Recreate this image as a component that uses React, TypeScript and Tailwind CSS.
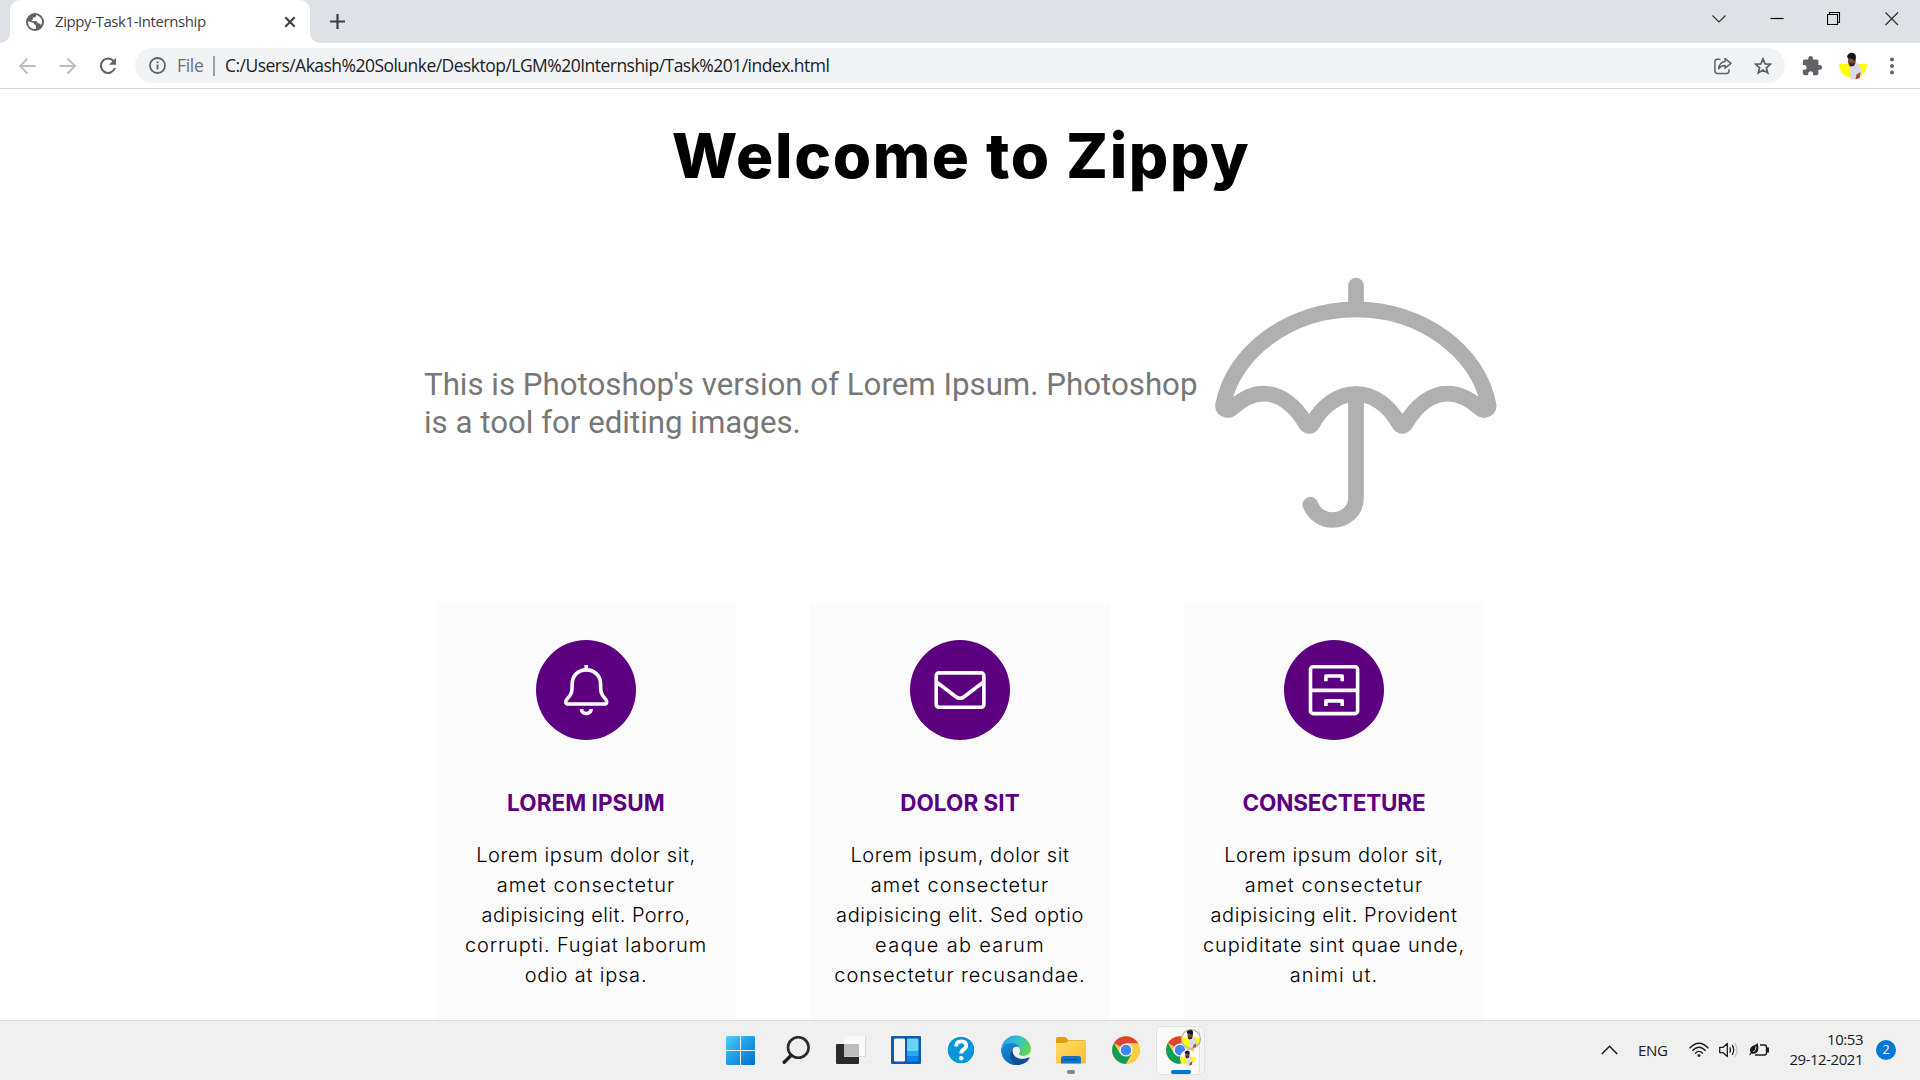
import type { ReactNode } from "react";

type Line = { text: string; tracking: string };
type Card = { title: string; titleTracking: string; icon: ReactNode; lines: Line[] };

const BellIcon = () => (
  <svg viewBox="0 0 100 100" className="size-[100px]" fill="none" stroke="#fff" strokeWidth="3.6">
    <path d="M50.2 25v5" />
    <path d="M50.2 29.9C42 29.9 36.2 36 36.2 43.5C36.2 51 36 54 31.3 58.8C28.6 61.5 29.6 64 32.5 64H68C70.9 64 71.9 61.5 69.2 58.8C64.5 54 64.6 51 64.6 43.5C64.6 36 58.4 29.9 50.2 29.9Z" />
    <path d="M45.4 69C45.6 75 54.9 75 55.2 69" />
  </svg>
);

const MailIcon = () => (
  <svg viewBox="0 0 100 100" className="size-[100px]" fill="none" stroke="#fff" strokeWidth="3.6">
    <rect x="26.2" y="32.9" width="47.7" height="34.3" rx="2.6" />
    <path d="M26.5 42L45.5 56.5Q50 60 54.5 56.5L73.5 42" />
  </svg>
);

const CabinetIcon = () => (
  <svg viewBox="0 0 100 100" className="size-[100px]" fill="none" stroke="#fff" strokeWidth="3.6">
    <rect x="26.5" y="26.8" width="47.1" height="46.8" rx="2.6" />
    <path d="M26 50.4H74" />
    <path d="M41.9 41.2V36H58.2V41.2M41.9 66V60.9H58.2V66" strokeLinejoin="round" />
  </svg>
);

const cards: Card[] = [
  {
    title: "LOREM IPSUM",
    titleTracking: "tracking-[0.05px]",
    icon: <BellIcon />,
    lines: [
      { text: "Lorem ipsum dolor sit,", tracking: "tracking-[0.6px]" },
      { text: "amet consectetur", tracking: "tracking-[1.05px]" },
      { text: "adipisicing elit. Porro,", tracking: "tracking-[0.42px]" },
      { text: "corrupti. Fugiat laborum", tracking: "tracking-[0.86px]" },
      { text: "odio at ipsa.", tracking: "tracking-[0.8px]" },
    ],
  },
  {
    title: "DOLOR SIT",
    titleTracking: "tracking-[0.05px]",
    icon: <MailIcon />,
    lines: [
      { text: "Lorem ipsum, dolor sit", tracking: "tracking-[0.57px]" },
      { text: "amet consectetur", tracking: "tracking-[1.05px]" },
      { text: "adipisicing elit. Sed optio", tracking: "tracking-[0.62px]" },
      { text: "eaque ab earum", tracking: "tracking-[1.3px]" },
      { text: "consectetur recusandae.", tracking: "tracking-[0.9px]" },
    ],
  },
  {
    title: "CONSECTETURE",
    titleTracking: "tracking-[-0.15px]",
    icon: <CabinetIcon />,
    lines: [
      { text: "Lorem ipsum dolor sit,", tracking: "tracking-[0.6px]" },
      { text: "amet consectetur", tracking: "tracking-[1.05px]" },
      { text: "adipisicing elit. Provident", tracking: "tracking-[0.6px]" },
      { text: "cupiditate sint quae unde,", tracking: "tracking-[0.86px]" },
      { text: "animi ut.", tracking: "tracking-[1.1px]" },
    ],
  },
];

/* Small portrait on a white and yellow disc */
const Portrait = ({ size, ring }: { size: string; ring?: boolean }) => (
  <svg viewBox="0 0 28 28" className={size}>
    <circle cx="14" cy="14" r="14" fill="#fdfdfd" />
    <path d="M0 12H28A14 14 0 0 1 0 12Z" fill="#ffff00" />
    <path d="M11 13.5L17 10.5Q21.5 13 22 18L21 25.5Q16 28.5 11.5 27Z" fill="#d9dbe6" />
    <path d="M17.5 22.5L21.5 20L21 25.5Q19 27 16.5 27.2Z" fill="#b0482f" />
    <path d="M9.5 5.5Q13 2.5 16.5 5.5Q17.5 10 15.5 13L10.5 14Q8 10 9.5 5.5Z" fill="#7a4a3a" />
    <path d="M8 5Q8.5 1 13 .8Q17.5 1 16.8 6L15.5 9Q13.5 5.5 9.3 6.5Z" fill="#17131c" />
    <path d="M10 10Q12 12.5 15.5 10.5L15 14L11 14.6Z" fill="#3c2226" />
    {ring && <circle cx="14" cy="14" r="13.2" fill="none" stroke="#a9a9a9" strokeWidth="1.5" />}
  </svg>
);

const ChromeLogo = ({ className }: { className: string }) => (
  <svg viewBox="0 0 28 28" className={className}>
    <circle cx="14" cy="14" r="14" fill="#ffcd40" />
    <path d="M14 14L1.9 7A14 14 0 0 1 26.1 7.4H14Z" fill="#db4437" />
    <path d="M1.9 7A14 14 0 0 0 14 28L20 17.5L8 17.5Z" fill="#0f9d58" />
    <path d="M14 7.4H26.3A14 14 0 0 1 14 28L20 17.5Z" fill="#ffcd40" />
    <circle cx="14" cy="14" r="6.6" fill="#f1f1f1" />
    <circle cx="14" cy="14" r="5.2" fill="#4285f4" />
  </svg>
);

const TabStrip = () => (
  <div className="flex h-[43px] shrink-0 items-stretch bg-[#dee1e6]">
    <div className="flex w-[10px] bg-white">
      <div className="w-full rounded-br-[10px] bg-[#dee1e6]" />
    </div>
    <div className="flex w-[300px] items-center rounded-t-[10px] bg-white pl-4 pr-[13px]">
      <svg viewBox="0 0 18 18" className="size-[18px]">
        <circle cx="9" cy="9" r="9" fill="#5f6368" />
        <path d="M2 8.2L5.2 9.2Q8 9.2 8 11.3L9.8 12V15.9Q5 16.6 2.6 12.2Q1.8 10.3 2 8.2Z" fill="#fff" />
        <path d="M10.3 2.1L9.4 4.2L6.8 4.6V6.6L5.6 7.4V8H10.4L12 10.3L14.4 10.8L14.8 12.6Q17.4 8.5 14.6 4.8Q12.9 2.7 10.3 2.1Z" fill="#fff" />
      </svg>
      <span className="-mt-[2px] ml-[11px] whitespace-nowrap text-[15px] leading-5 tracking-[-0.42px] text-[#3c4043]">Zippy-Task1-Internship</span>
      <svg viewBox="0 0 14 14" className="ml-auto size-[14px]" stroke="#3c4043" strokeWidth="2.1">
        <path d="M2.3 2.3L11.7 11.7M11.7 2.3L2.3 11.7" />
      </svg>
    </div>
    <div className="flex w-[10px] bg-white">
      <div className="w-full rounded-bl-[10px] bg-[#dee1e6]" />
    </div>
    <svg viewBox="0 0 15 15" className="ml-[10px] size-[15px] self-center" stroke="#3c4043" strokeWidth="2.2">
      <path d="M7.5 0V15M0 7.5H15" />
    </svg>
    <div className="ml-auto flex items-start gap-[43.5px] pr-[21.5px] pt-[12px]">
      <svg viewBox="0 0 14 14" className="size-[14px]" fill="none" stroke="#333" strokeWidth="1.2">
        <path d="M.5 3.5L7 10L13.5 3.5" />
      </svg>
      <svg viewBox="0 0 14 14" className="size-[14px]" fill="none" stroke="#000" strokeWidth="1.2">
        <path d="M.5 6.5H13.5" />
      </svg>
      <svg viewBox="0 0 14 14" className="size-[14px]" fill="none" stroke="#000" strokeWidth="1.1">
        <path d="M.5 2.5H10.5V12.5H.5ZM2.5 2.5V.5H12.5V10.5H10.5" />
      </svg>
      <svg viewBox="0 0 14 14" className="size-[14px]" fill="none" stroke="#333" strokeWidth="1.3">
        <path d="M.5 .5L13 13M13 .5L.5 13" />
      </svg>
    </div>
  </div>
);

const Toolbar = () => (
  <div className="flex h-[46px] shrink-0 items-center border-b border-[#d5d7da] bg-white">
    <svg viewBox="0 0 18 18" className="ml-[18px] size-[18px]" fill="none" stroke="#bbbdbf" strokeWidth="1.9">
      <path d="M17.5 9H2.5M9.5 1.5L2 9L9.5 16.5" />
    </svg>
    <svg viewBox="0 0 18 18" className="ml-[23px] size-[18px]" fill="none" stroke="#bbbdbf" strokeWidth="1.9">
      <path d="M.5 9H15.5M8.5 1.5L16 9L8.5 16.5" />
    </svg>
    <svg viewBox="0 0 18 18" className="ml-[22px] size-[18px]" fill="none" stroke="#5f6368" strokeWidth="2.1">
      <path d="M14.8 4.4A7.2 7.2 0 1 0 15.9 11" />
      <path d="M17 .8V7.8H10Z" fill="#5f6368" stroke="none" />
    </svg>
    <div className="ml-[18px] flex h-[35px] w-[1650px] items-center rounded-full bg-[#f1f3f4] pl-[14px]">
      <svg viewBox="0 0 17 17" className="size-[17px]" fill="none" stroke="#5f6368" strokeWidth="1.8">
        <circle cx="8.5" cy="8.5" r="7.5" />
        <path d="M8.5 7.6V12.6M8.5 4.4V6.3" />
      </svg>
      <span className="-mt-[2px] ml-[11px] text-[17.5px] leading-6 tracking-[-0.3px] text-[#6b6f74]">File</span>
      <div className="ml-[9px] h-[20px] w-[2px] bg-[#9b9ea2]" />
      <span className="-mt-[2px] ml-[10.5px] whitespace-nowrap text-[17.5px] leading-6 tracking-[-0.53px] text-[#202124]">
        C:/Users/Akash%20Solunke/Desktop/LGM%20Internship/Task%201/index.html
      </span>
      <svg viewBox="0 0 18 18" className="ml-auto size-[18px]" fill="none" stroke="#5f6368" strokeWidth="1.5">
        <path d="M6.5 2.2H3.2Q.9 2.2 .9 4.5V13.8Q.9 16.4 3.2 16.4H12.8Q15 16.4 15 13.8V12.2" />
        <path d="M11 1.6L17 6.4L11 11.2V8.6Q6.8 8.5 4.6 11.8Q5.2 5.2 11 4.4Z" strokeLinejoin="round" />
      </svg>
      <svg viewBox="0 0 18 18" className="ml-[22px] mr-[13.5px] size-[18px]" fill="none" stroke="#5f6368" strokeWidth="1.8">
        <path d="M9 1.9L11.1 6.8L16.5 7.2L12.4 10.7L13.7 15.9L9 13.1L4.3 15.9L5.6 10.7L1.5 7.2L6.9 6.8Z" />
      </svg>
    </div>
    <svg viewBox="0 0 24 24" className="ml-[16px] size-[22px]" fill="#5f6368">
      <path d="M20.5 11H19V7c0-1.1-.9-2-2-2h-4V3.5a2.5 2.5 0 0 0-5 0V5H4c-1.1 0-1.99.9-1.99 2v3.8H3.5c1.49 0 2.7 1.21 2.7 2.7s-1.21 2.7-2.7 2.7H2V20c0 1.1.9 2 2 2h3.8v-1.5c0-1.49 1.21-2.7 2.7-2.7s2.7 1.21 2.7 2.7V22H17c1.1 0 2-.9 2-2v-4h1.5a2.5 2.5 0 0 0 0-5z" />
    </svg>
    <div className="ml-[16px] flex">
      <Portrait size="size-[28px]" />
    </div>
    <svg viewBox="0 0 6 18" className="ml-[22px] h-[18px] w-[6px]" fill="#5f6368">
      <circle cx="3" cy="2.6" r="2" />
      <circle cx="3" cy="9" r="2" />
      <circle cx="3" cy="15.4" r="2" />
    </svg>
  </div>
);

const Umbrella = () => (
  <svg viewBox="60 0 870 870" className="size-[290px] shrink-0" fill="none" stroke="#b0b0b0" strokeWidth="47" strokeLinecap="round" strokeLinejoin="round">
    <path d="M498 77V148" />
    <path d="M99 437C128 276 300 148 498 148C696 148 867 276 896 437Q896 447 882 450Q876 450 870 444C840 418 806 401 773 401C722 401 678 438 646 492Q641 498 637 498Q632 498 628 492C597 436 550 402 498 402C446 402 397 436 367 492Q363 498 358 498Q353 498 348 492C318 438 272 401 220 401C186 401 156 418 126 444Q119 450 113 450Q99 447 99 437Z" />
    <path d="M498 402V715C498 752 466 780 428 780C398 780 372 762 361 734" />
  </svg>
);

const Slot = ({ children }: { children: ReactNode }) => (
  <div className="flex w-[55px] items-center justify-center">{children}</div>
);

const Taskbar = () => (
  <div className="grid h-[60px] shrink-0 grid-cols-[713px_495px_1fr] border-t border-[#dcdcdc] bg-[#f0f0f0]">
    <div />
    <div className="flex pb-px">
      <Slot>
        <svg viewBox="0 0 29 29" className="size-[29px]">
          <defs>
            <linearGradient id="win" x1="0" y1="0" x2="1" y2="1">
              <stop offset="0" stopColor="#4fd0fb" />
              <stop offset=".5" stopColor="#1e9be6" />
              <stop offset="1" stopColor="#0070d0" />
            </linearGradient>
          </defs>
          <path d="M1 0H14V14H0V1ZM15 0H28L29 1V14H15ZM0 15H14V29H1L0 28ZM15 15H29V28L28 29H15Z" fill="url(#win)" />
        </svg>
      </Slot>
      <Slot>
        <svg viewBox="0 0 28 28" className="size-[28px]" fill="none">
          <circle cx="16.3" cy="11.5" r="10.3" stroke="#2b2b2b" strokeWidth="2.6" />
          <path d="M9 19.5L2.2 26.3" stroke="#222" strokeWidth="3.4" strokeLinecap="round" />
        </svg>
      </Slot>
      <Slot>
        <svg viewBox="0 0 30 28" className="h-[28px] w-[30px]">
          <rect x="0" y="8" width="23" height="20" rx="1" fill="#2b2b2b" />
          <rect x="8" y=".5" width="22" height="20" rx="1" fill="#fafafa" />
          <path d="M8 20.5H29.5V1" fill="none" stroke="#d8d8d8" />
          <path d="M8 8H23V20.5H8Z" fill="#bdbdbd" />
        </svg>
      </Slot>
      <Slot>
        <svg viewBox="0 0 30 28" className="h-[28px] w-[30px]">
          <rect width="30" height="28" rx="1" fill="#0b5cad" />
          <rect x="3" y="2.5" width="11" height="23" rx="1.2" fill="#f4f4f4" />
          <rect x="16" y="2.5" width="11.5" height="12.5" rx="1" fill="#67d3fb" />
          <rect x="16" y="15" width="11.5" height="5" fill="#28a8f5" />
          <rect x="16" y="20" width="11.5" height="5.5" rx="1" fill="#0a84ec" />
        </svg>
      </Slot>
      <Slot>
        <svg viewBox="0 0 30 30" className="size-[30px]">
          <circle cx="15" cy="15" r="14.5" fill="#fff" />
          <circle cx="15" cy="15" r="13.3" fill="#0796d8" />
          <path d="M10.2 11.5Q10.2 6.3 15.2 6.3Q20.2 6.4 20.2 10.6Q20.2 12.9 17.5 14.6Q15.2 16 15.2 18.6" fill="none" stroke="#fff" strokeWidth="3.8" />
          <circle cx="15.2" cy="23.2" r="2.3" fill="#fff" />
        </svg>
      </Slot>
      <Slot>
        <svg viewBox="0 0 30 30" className="size-[30px]">
          <defs>
            <linearGradient id="edgeTop" x1="0" y1=".2" x2="1" y2=".6">
              <stop offset="0" stopColor="#1f9fe0" />
              <stop offset=".5" stopColor="#2fc4cf" />
              <stop offset="1" stopColor="#66d84a" />
            </linearGradient>
            <linearGradient id="edgeLeft" x1="0" y1="0" x2=".6" y2="1">
              <stop offset="0" stopColor="#1c90dc" />
              <stop offset="1" stopColor="#0b62b4" />
            </linearGradient>
          </defs>
          <path d="M.5 12A15 15 0 0 1 30 13.5C30 18 27 21 22.5 21C18 21 17 19 18.5 17.5C20 15 18 10 11.5 9.5Q4 9 .5 12Z" fill="url(#edgeTop)" />
          <path d="M0 15C0 7 16.5 6 18.3 12C15 10.8 10.5 14 11 19C11.5 25 16 29 20 29.2A15 15 0 0 1 0 15Z" fill="url(#edgeLeft)" />
          <path d="M12 13.5C6.5 19.5 9 28 17 30C22 29.7 26.5 27 28.5 23Q28.5 22 27.5 22.3C19 26 10 21 12 13.5Z" fill="#0c4f94" />
          <path d="M12 13.5C13.5 11.5 17 11 18.3 13.5C19 15 18.5 17 17.3 18C16.8 19.5 19 21.3 23 21C28 20.8 29.5 18 29.8 16.5Q29.5 19.5 28.3 22Q24 24.6 18.5 23.5C12.5 22 10.8 17 12 13.5Z" fill="#f0f0f0" />
        </svg>
      </Slot>
      <div className="flex w-[55px] flex-col items-center pt-[16px]">
        <svg viewBox="0 0 30 27" className="h-[27px] w-[30px]">
          <defs>
            <linearGradient id="folder" x1="0" y1="0" x2="1" y2="1">
              <stop offset="0" stopColor="#ffdd6b" />
              <stop offset="1" stopColor="#fbbd2c" />
            </linearGradient>
          </defs>
          <path d="M0 1.5Q0 0 1.5 0H9.5L12.5 3.2H28.5Q30 3.2 30 4.7V12H0Z" fill="#e0a010" />
          <path d="M0 6H9.8L12.5 4H30V26.5H0Z" fill="url(#folder)" />
          <path d="M5 26.5V21.5Q5 19 7.5 19H22.5Q25 19 25 21.5V26.5Z" fill="#1273c4" />
          <path d="M8.5 22.6H21.5" stroke="#0a4a87" strokeWidth="1.2" />
        </svg>
        <div className="mt-[6px] h-1 w-2 rounded-full bg-[#868686]" />
      </div>
      <Slot>
        <ChromeLogo className="size-[28px]" />
      </Slot>
      <div className="flex w-[55px] justify-center pt-[5px]">
        <div className="relative h-[49px] w-[49px] rounded-[5px] border border-[#e2e2e2] bg-[#f5f5f5]">
          <div className="absolute left-0 top-0 h-[47px] w-[43px] rounded-[5px] border-r border-[#dedede] bg-[#fafafa]" />
          <ChromeLogo className="absolute left-[9px] top-[9px] size-[28px]" />
          <div className="absolute left-[24px] top-[2px] flex">
            <Portrait size="size-[20px]" ring />
          </div>
          <div className="absolute left-[22.5px] top-[23px] flex">
            <Portrait size="size-[16px]" />
          </div>
          <div className="absolute left-[14px] top-[43px] h-1 w-5 rounded-full bg-[#0078d4]" />
        </div>
      </div>
    </div>
    <div className="flex items-center justify-end pb-px pr-[24px] text-[#1b1b1b]">
      <svg viewBox="0 0 17 10" className="h-[10px] w-[17px]" fill="none" stroke="#1b1b1b" strokeWidth="1.5">
        <path d="M.8 9L8.5 1.2L16.2 9" />
      </svg>
      <span className="ml-[20px] w-[29px] text-[15px] leading-5 tracking-[-0.31px]">ENG</span>
      <svg viewBox="0 0 20 16" className="ml-[22px] h-[16px] w-[20px]" fill="none" stroke="#1b1b1b" strokeWidth="1.4">
        <path d="M.6 6.2Q10-3.8 19.4 6.2M3.4 8.8Q10 1.6 16.6 8.8M6 11.6Q10 7.2 14 11.6" />
        <circle cx="10" cy="13.6" r="1.4" fill="#1b1b1b" stroke="none" />
      </svg>
      <svg viewBox="0 0 20 16" className="ml-[10px] h-[16px] w-[20px]" fill="none" stroke="#1b1b1b" strokeWidth="1.3">
        <path d="M.7 5.4H4L8.3 1.4V14.6L4 10.6H.7Z" strokeLinejoin="round" />
        <path d="M10.8 5.3Q12.4 8 10.8 10.7M13.2 3.2Q16.2 8 13.2 12.8" />
        <path d="M15.8 1.2Q20.4 8 15.8 14.8" stroke="#c4c4c4" />
      </svg>
      <svg viewBox="0 0 21 16" className="ml-[10px] h-[16px] w-[21px]" fill="none" stroke="#1b1b1b" strokeWidth="1.4">
        <path d="M11 3H15.5Q17.5 3 17.5 5V11Q17.5 13 15.5 13H6" />
        <path d="M18 6.2H19.3V9.8H18Z" fill="#1b1b1b" />
        <path d="M8.5 1Q10.5 8 8 10.5Q5.5 12.5 2.5 11.5L1 13.5L.3 12.8L1.6 10.8Q-.3 6 3.5 4Q7 2.8 8.5 1Z" fill="#1b1b1b" stroke="none" />
        <path d="M7 4.5Q7 8 4.5 10" stroke="#f0f0f0" strokeWidth=".9" />
      </svg>
      <div className="-mt-[2px] ml-[18px] flex w-[75px] flex-col items-end whitespace-nowrap text-[15px] leading-5 tracking-[-0.47px]">
        <span>10:53</span>
        <span>29-12-2021</span>
      </div>
      <div className="ml-[13px] flex size-[20px] items-center justify-center rounded-full bg-[#0078d4] text-[12.5px] leading-none text-white">2</div>
    </div>
  </div>
);

export default function App() {
  return (
    <div className="flex h-[1080px] w-[1920px] flex-col overflow-hidden bg-white font-['Open_Sans',sans-serif]">
      <TabStrip />
      <Toolbar />
      <main className="flex min-h-0 flex-1 flex-col overflow-hidden bg-white font-['Inter',sans-serif]">
        <h1 className="mt-[19px] h-[96px] pl-[2px] text-center text-[62px] font-extrabold leading-[96px] tracking-[1.65px] text-black">
          Welcome to Zippy
        </h1>
        <section className="mt-[56px] flex items-center pl-[424px]">
          <p className="-mt-[3px] w-[786px] shrink-0 font-['Roboto',sans-serif] text-[31.25px] leading-[37.5px] text-[#777777]">
            <span className="block whitespace-nowrap">This is Photoshop's version of Lorem Ipsum. Photoshop</span>
            <span className="block whitespace-nowrap">is a tool for editing images.</span>
          </p>
          <Umbrella />
        </section>
        <section className="mt-[53px] flex min-h-0 flex-1 gap-[74px] pl-[436px]">
          {cards.map((card) => (
            <article key={card.title} className="flex w-[300px] flex-col items-center bg-[#fbfbfb] pt-[37px]">
              <div className="size-[100px] shrink-0 rounded-full bg-[#5c0080]">{card.icon}</div>
              <h2 className={`mt-[45px] text-[22.5px] font-bold leading-[35px] text-[#5c0080] ${card.titleTracking}`}>{card.title}</h2>
              <p className="mt-[20px] text-center text-[20px] font-light leading-[30px] text-black">
                {card.lines.map((line) => (
                  <span key={line.text} className={`block whitespace-nowrap ${line.tracking}`}>{line.text}</span>
                ))}
              </p>
            </article>
          ))}
        </section>
      </main>
      <Taskbar />
    </div>
  );
}
